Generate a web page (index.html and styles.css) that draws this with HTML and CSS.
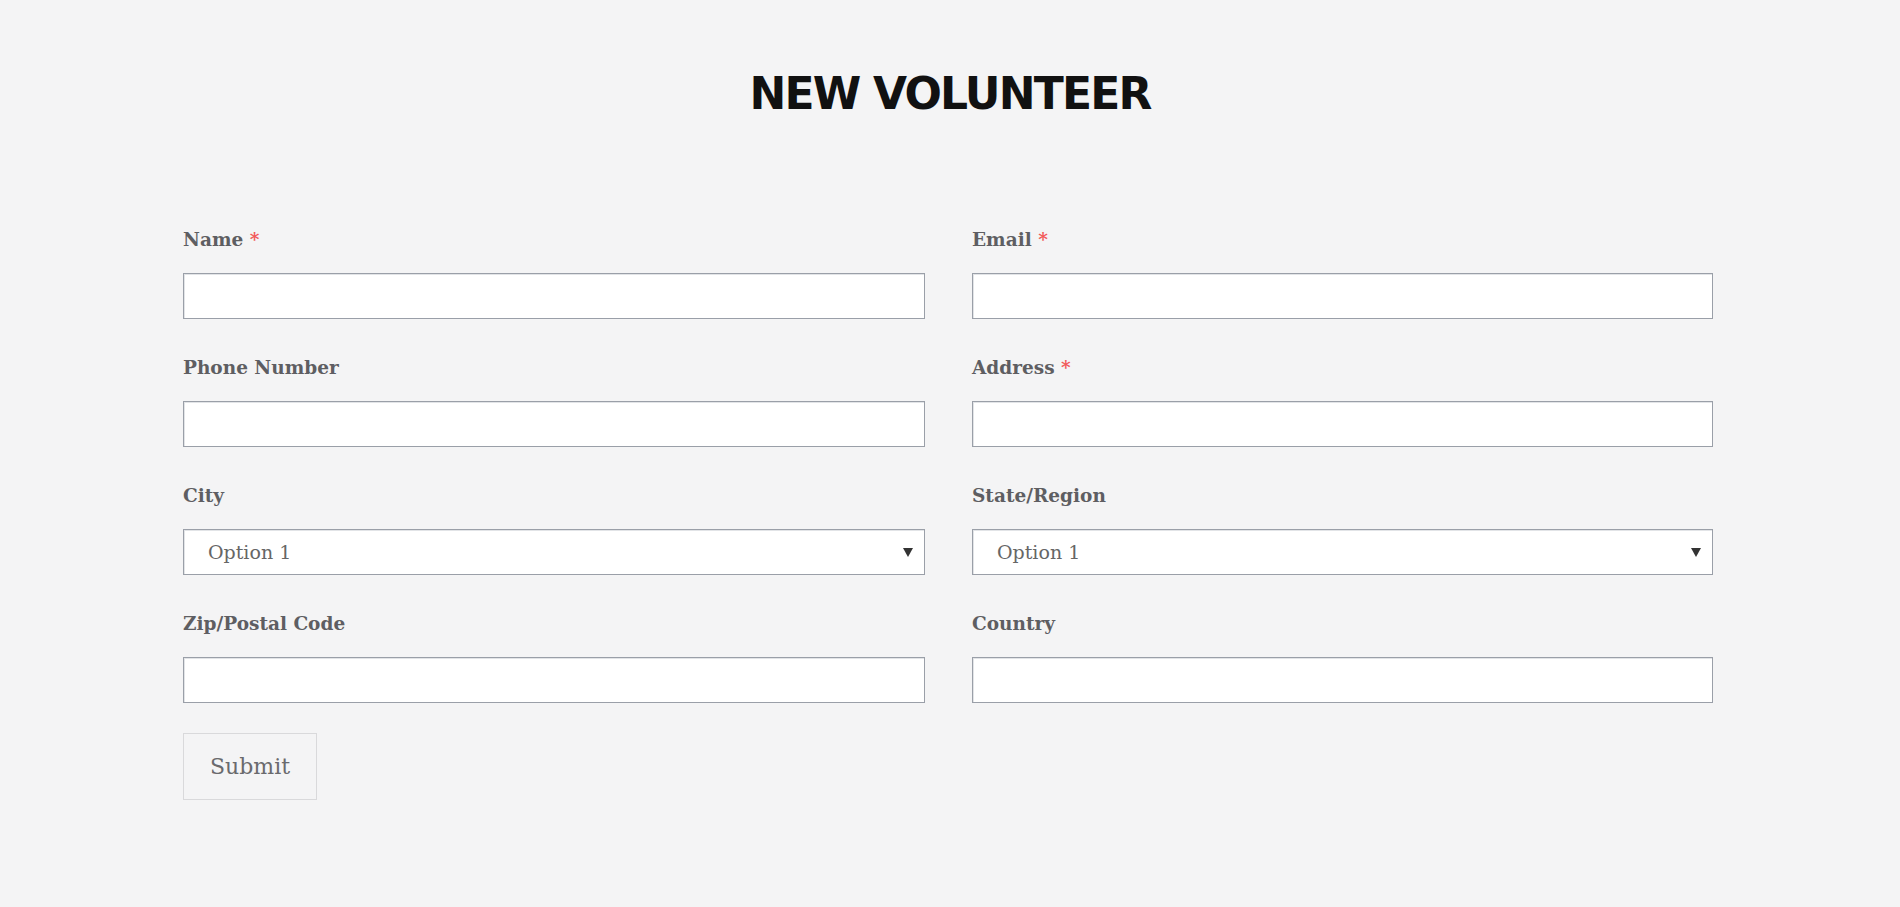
FILE: index.html
```html
<!DOCTYPE html>
<html lang="en">
<head>
<meta charset="utf-8">
<title>New Volunteer</title>
<link rel="stylesheet" href="styles.css">
</head>
<body>
<main class="page">
  <h1 class="title">NEW VOLUNTEER</h1>
  <form class="form">
    <div class="grid">
      <div class="field">
        <label class="label">Name <span class="req">*</span></label>
        <input class="input" type="text">
      </div>
      <div class="field">
        <label class="label">Email <span class="req">*</span></label>
        <input class="input" type="text">
      </div>
      <div class="field">
        <label class="label">Phone Number</label>
        <input class="input" type="text">
      </div>
      <div class="field">
        <label class="label">Address <span class="req">*</span></label>
        <input class="input" type="text">
      </div>
      <div class="field">
        <label class="label">City</label>
        <div class="select-wrap">
          <select class="input select"><option>Option 1</option></select>
        </div>
      </div>
      <div class="field">
        <label class="label">State/Region</label>
        <div class="select-wrap">
          <select class="input select"><option>Option 1</option></select>
        </div>
      </div>
      <div class="field">
        <label class="label">Zip/Postal Code</label>
        <input class="input" type="text">
      </div>
      <div class="field">
        <label class="label">Country</label>
        <input class="input" type="text">
      </div>
    </div>
    <button class="submit" type="button">Submit</button>
  </form>
</main>
</body>
</html>
```

FILE: styles.css
```css
html, body {
  margin: 0;
  padding: 0;
  background: #f4f4f5;
}

.page {
  width: 1534px;
  margin: 0 auto;
  padding-top: 67px;
}

.title {
  margin: 0;
  text-align: center;
  font-family: "DejaVu Sans", "Inter", sans-serif;
  font-weight: 700;
  font-size: 44px;
  line-height: 53px;
  letter-spacing: -1.8px;
  color: #111111;
}

.form {
  margin-top: 106px;
}

.grid {
  display: grid;
  grid-template-columns: 742px 741px;
  column-gap: 47px;
  row-gap: 35px;
  margin-bottom: 30px;
}

.field {
  display: flex;
  flex-direction: column;
}

.label {
  font-family: "DejaVu Serif", "Liberation Serif", serif;
  font-weight: 700;
  font-size: 18.5px;
  line-height: 27px;
  color: #5e5e62;
  margin-bottom: 20px;
}

.req {
  color: #f25a5a;
}

.input {
  box-sizing: border-box;
  width: 100%;
  height: 46px;
  margin: 0;
  background: #ffffff;
  border: 1px solid #9a9fa8;
  box-shadow: inset 1px 1px 0 #e2e4e7;
  border-radius: 0;
  font-family: "DejaVu Serif", "Liberation Serif", serif;
  font-size: 19px;
  color: #666666;
  padding: 0 24px;
  outline: none;
}

.select-wrap {
  position: relative;
}

.select {
  appearance: none;
  -webkit-appearance: none;
}

.select-wrap::after {
  content: "";
  position: absolute;
  right: 12px;
  top: 19px;
  width: 0;
  height: 0;
  border-left: 5px solid transparent;
  border-right: 5px solid transparent;
  border-top: 9px solid #333333;
  pointer-events: none;
}

.submit {
  box-sizing: border-box;
  width: 134px;
  height: 67px;
  background: #f4f4f5;
  border: 1px solid #d9d9db;
  border-radius: 0;
  font-family: "DejaVu Serif", "Liberation Serif", serif;
  font-size: 22px;
  color: #6a6a6d;
  padding: 0;
  cursor: pointer;
}
```
